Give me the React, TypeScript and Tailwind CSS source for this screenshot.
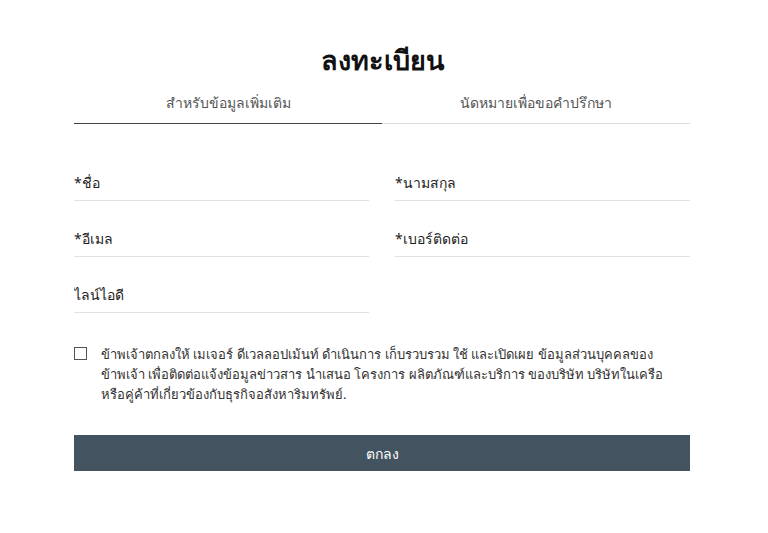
import React, { useState } from 'react';

const fields = ['*ชื่อ', '*นามสกุล', '*อีเมล', '*เบอร์ติดต่อ', 'ไลน์ไอดี'];

export default function App() {
  const [tab, setTab] = useState(0);
  const [agree, setAgree] = useState(false);

  return (
    <div className="min-h-[533px] w-full bg-white font-['Noto_Sans','Liberation_Sans',sans-serif] text-[#222]">
      <div className="ml-[74px] w-[616px] pt-[40px]">
        <h1 className="text-center text-[27px] font-semibold leading-[40px] text-[#111]">ลงทะเบียน</h1>

        <div className="mt-[12px] grid grid-cols-2 border-b border-[#dcdcdc]">
          {['สำหรับข้อมูลเพิ่มเติม', 'นัดหมายเพื่อขอคำปรึกษา'].map((t, i) => (
            <button
              key={t}
              onClick={() => setTab(i)}
              className={`-mb-px flex h-[32px] items-start justify-center border-b pt-[1px] text-[14px] leading-[20px] text-[#555] ${
                tab === i ? 'border-[#444]' : 'border-transparent'
              }`}
            >
              {t}
            </button>
          ))}
        </div>

        <div className="mt-[43px] grid grid-cols-2 gap-x-[26px] gap-y-[22px]">
          {fields.map(f => (
            <input
              key={f}
              placeholder={f}
              className="h-[34px] w-full border-b border-[#e2e2e2] pb-[3px] text-[14px] text-[#222] outline-none placeholder:text-[#222]"
            />
          ))}
        </div>

        <label className="mt-[31px] flex items-start gap-[14px] text-[13px] leading-[20px] text-[#333]">
          <input
            type="checkbox"
            checked={agree}
            onChange={e => setAgree(e.target.checked)}
            className="mt-[3px] h-[13px] w-[13px] shrink-0 appearance-none border border-[#555] bg-white checked:bg-[#43535f]"
          />
          <span>
            ข้าพเจ้าตกลงให้ เมเจอร์ ดีเวลลอปเม้นท์ ดำเนินการ เก็บรวบรวม ใช้ และเปิดเผย ข้อมูลส่วนบุคคลของข้าพเจ้า เพื่อติดต่อแจ้งข้อมูลข่าวสาร นำเสนอ โครงการ ผลิตภัณฑ์และบริการ ของบริษัท บริษัทในเครือ หรือคู่ค้าที่เกี่ยวข้องกับธุรกิจอสังหาริมทรัพย์.
          </span>
        </label>

        <button className="mt-[31px] h-[36px] w-full bg-[#43535f] text-[14px] font-medium text-white">ตกลง</button>
      </div>
    </div>
  );
}
